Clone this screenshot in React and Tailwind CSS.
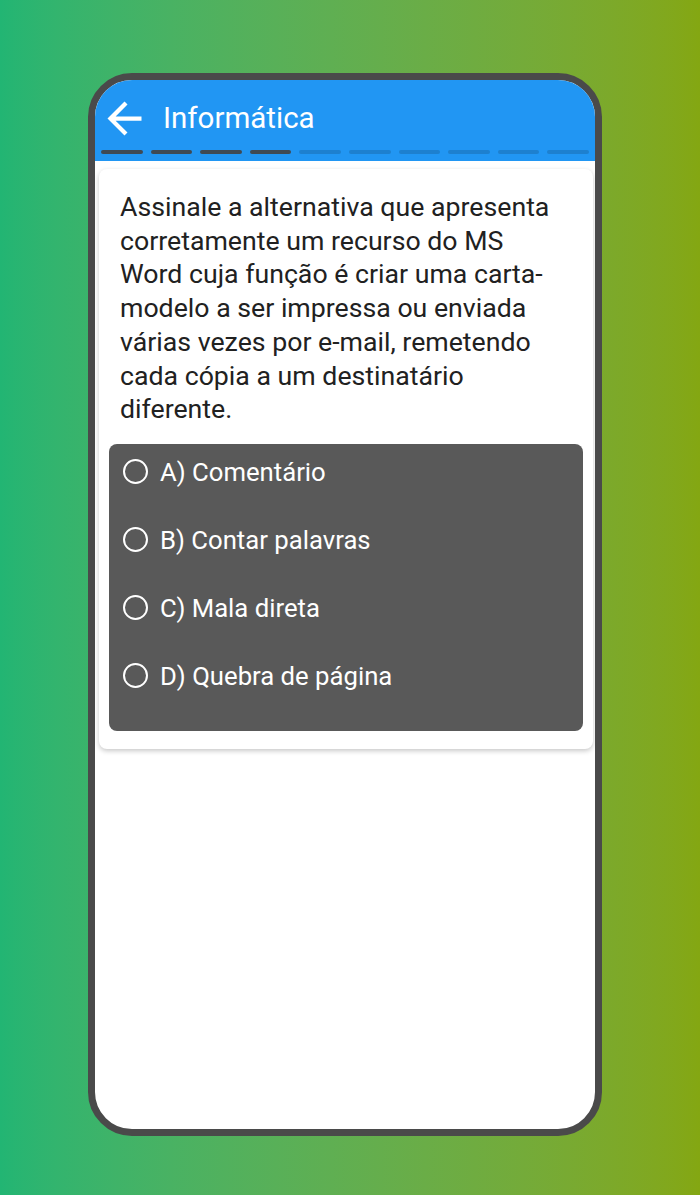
import React from "react";

const options = [
  "A) Comentário",
  "B) Contar palavras",
  "C) Mala direta",
  "D) Quebra de página",
];

const App = () => {
  const segments = Array.from({ length: 10 }, (_, i) => i);

  return (
    <div
      className="w-[700px] h-[1195px] bg-gradient-to-r from-[#22b573] to-[#84a712] flex pt-[73px] pl-[88px]"
      style={{ fontFamily: "Roboto, 'Liberation Sans', sans-serif" }}
    >
      <div className="w-[514px] h-[1063px] border-[7px] border-[#4a4a4a] rounded-[44px] bg-white overflow-hidden flex flex-col">
        {/* header */}
        <div className="bg-[#2196f3] pb-[7px] flex flex-col">
          <div className="flex items-center h-[70px] pt-[7px] pl-[4px]">
            <svg width="51" height="51" viewBox="0 0 24 24" fill="white">
              <path d="M20 11H7.83l5.59-5.59L12 4l-8 8 8 8 1.41-1.41L7.83 13H20v-2z" />
            </svg>
            <span className="text-white text-[29.5px] ml-[13px] leading-none">
              Informática
            </span>
          </div>
          <div className="flex gap-[8px] px-[6px]">
            {segments.map((i) => (
              <div
                key={i}
                className={
                  i < 4
                    ? "h-[4px] flex-1 rounded-full bg-[#3f4a54]"
                    : "h-[4px] flex-1 rounded-full bg-[#1d80cf]"
                }
              />
            ))}
          </div>
        </div>

        {/* card */}
        <div className="ml-[4px] mr-[2px] mt-[8px] bg-white rounded-[8px] shadow-[0_2px_5px_rgba(0,0,0,0.22)] px-[10px] pt-[22px] pb-[18px]">
          <p className="px-[11px] text-[26.7px] leading-[33.7px] text-[#212121]">
            Assinale a alternativa que apresenta corretamente um recurso do MS
            Word cuja função é criar uma carta-modelo a ser impressa ou enviada
            várias vezes por e-mail, remetendo cada cópia a um destinatário
            diferente.
          </p>
          <div className="mt-[17px] bg-[#595959] rounded-[8px] pt-[14px] pb-[41px] pl-[14px] flex flex-col gap-[40px]">
            {options.map((o) => (
              <div key={o} className="flex items-center h-[28px]">
                <div className="w-[25px] h-[25px] rounded-full border-[2.5px] border-white" />
                <span className="ml-[12px] text-white text-[25.7px]">{o}</span>
              </div>
            ))}
          </div>
        </div>
      </div>
    </div>
  );
};

export default App;
